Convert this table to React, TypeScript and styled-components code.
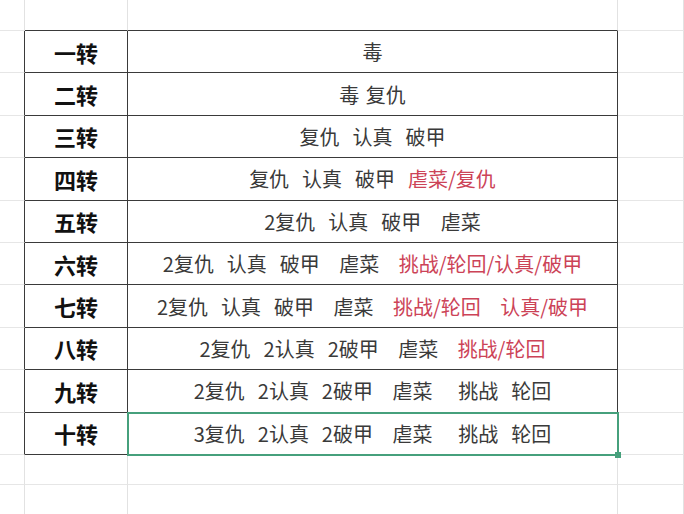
import React from 'react'
import styled, { createGlobalStyle } from 'styled-components'

const GlobalStyle = createGlobalStyle`
    html, body {
        margin:0;
        padding:0;
        background:#ffffff;
    }
    body {
        width:684px;
        height:514px;
        overflow:hidden;
        font-family:"Noto Sans CJK SC", "Noto Sans", sans-serif;
    }
`

type Part = { text: string, red?: boolean }

const rows: { label: string, parts: Part[] }[] = [
    { label: '一转', parts: [{ text: '毒' }] },
    { label: '二转', parts: [{ text: '毒 复仇' }] },
    { label: '三转', parts: [{ text: '复仇  认真  破甲' }] },
    { label: '四转', parts: [{ text: '复仇  认真  破甲  ' }, { text: '虐菜/复仇', red: true }] },
    { label: '五转', parts: [{ text: '2复仇  认真  破甲   虐菜' }] },
    { label: '六转', parts: [{ text: '2复仇  认真  破甲   虐菜   ' }, { text: '挑战/轮回/认真/破甲', red: true }] },
    { label: '七转', parts: [{ text: '2复仇  认真  破甲   虐菜   ' }, { text: '挑战/轮回   认真/破甲', red: true }] },
    { label: '八转', parts: [{ text: '2复仇  2认真  2破甲   虐菜   ' }, { text: '挑战/轮回', red: true }] },
    { label: '九转', parts: [{ text: '2复仇  2认真  2破甲   虐菜    挑战  轮回' }] },
    { label: '十转', parts: [{ text: '3复仇  2认真  2破甲   虐菜    挑战  轮回' }] },
]

const App = () => {
    return (
        <>
            <GlobalStyle />
            <Sheet>
                <Row $height={31}>
                    <Cell $dark={false} />
                    <Cell $dark={false} $bottomDark />
                    <Cell $dark={false} $bottomDark />
                    <Cell $dark={false} />
                </Row>
                {rows.map((row, i) => (
                    <Row $height={42.4} key={row.label}>
                        <Cell $dark />
                        <LabelCell>{row.label}</LabelCell>
                        <ValueCell $selected={i === rows.length - 1}>
                            {row.parts.map((p, j) => (
                                <Word $red={!!p.red} key={j}>{p.text}</Word>
                            ))}
                        </ValueCell>
                        <Cell $dark={false} />
                    </Row>
                ))}
                <Row $height={30}>
                    <Cell $dark={false} />
                    <Cell $dark={false} />
                    <Cell $dark={false} />
                    <Cell $dark={false} />
                </Row>
                <Row $height={30}>
                    <Cell $dark={false} />
                    <Cell $dark={false} />
                    <Cell $dark={false} />
                    <Cell $dark={false} />
                </Row>
            </Sheet>
        </>
    )
}

export default App

const Sheet = styled.div`
    display:flex;
    flex-direction:column;
    width:684px;
`

const Row = styled.div<{ $height: number }>`
    display:grid;
    grid-template-columns:25px 103px 490px 1fr;
    height:${p => p.$height}px;
`

const Cell = styled.div<{ $dark: boolean, $bottomDark?: boolean }>`
    box-sizing:border-box;
    border-right:1px solid ${p => p.$dark ? '#3a3a3a' : '#e2e2e2'};
    border-bottom:1px solid ${p => p.$bottomDark ? '#3a3a3a' : '#e6e6e6'};
`

const LabelCell = styled.div`
    box-sizing:border-box;
    border-right:1px solid #3a3a3a;
    border-bottom:1px solid #3a3a3a;
    display:flex;
    align-items:center;
    justify-content:center;
    font-size:22px;
    font-weight:700;
    color:#111;
`

const ValueCell = styled.div<{ $selected: boolean }>`
    box-sizing:border-box;
    position:relative;
    border-right:1px solid #3a3a3a;
    border-bottom:1px solid #3a3a3a;
    display:flex;
    align-items:center;
    justify-content:center;
    font-size:20px;
    color:#3a3a3a;
    white-space:pre;
    word-spacing:2px;
    ${p => p.$selected ? `
        &::after{
            content:'';
            position:absolute;
            left:-1px;
            top:-1px;
            right:-2px;
            bottom:-2px;
            border:2px solid #46a07c;
        }
        &::before{
            content:'';
            position:absolute;
            right:-4px;
            bottom:-4px;
            width:6px;
            height:6px;
            background:#46a07c;
            z-index:1;
        }
    ` : ''}
`

const Word = styled.span<{ $red: boolean }>`
    color:${p => p.$red ? '#cc4357' : 'inherit'};
`
